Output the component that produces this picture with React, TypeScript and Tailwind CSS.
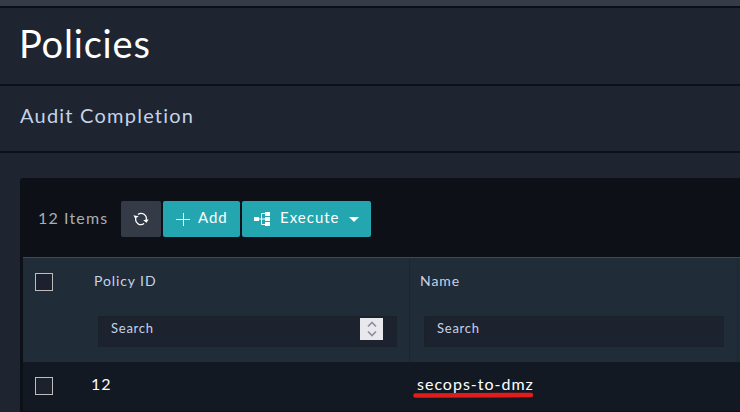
import type { ReactNode } from "react";

function Checkbox() {
  return <span className="block size-[18px] border border-[#bdbdbd] bg-[#1c212d]" />;
}

function RefreshIcon() {
  return (
    <svg width="16" height="14" viewBox="0 0 16 14" fill="none" stroke="#fff" strokeWidth="1.25">
      <path d="M4.9 2.4A5.3 5.3 0 0 1 13.1 8.2" />
      <path d="M11.1 11.6A5.3 5.3 0 0 1 2.9 5.8" />
      <path d="M10.2 8.2l5.4-1-2 3.6z" fill="#fff" stroke="none" />
      <path d="M.4 6.2l5.4-1L2.2 3z" fill="#fff" stroke="none" transform="matrix(1 0 0 -1 0 9.4)" />
    </svg>
  );
}

function TreeIcon() {
  return (
    <svg width="17" height="14" viewBox="0 0 17 14" fill="#fff">
      <path d="M0 5h5v4H0zM11 0h5v4h-5zM11 5h5v4h-5zM11 10h5v4h-5z" />
      <path d="M5 7h6M11 1.5H7.5v11H11" fill="none" stroke="#fff" strokeWidth="1" />
    </svg>
  );
}

function Field({ width, children }: { width: string; children?: ReactNode }) {
  return (
    <div className={`flex h-[31px] items-start justify-between border border-[#19212a] bg-[#1d222f] pr-[13px] pl-3 ${width}`}>
      <span className="pt-[2px] text-[13px] leading-[18px] tracking-[0.75px] text-[#c5d3e8]">Search</span>
      {children}
    </div>
  );
}

export default function App() {
  return (
    <div className="flex h-[412px] w-[740px] flex-col overflow-hidden bg-[#1e2430] font-[Lato,sans-serif]">
      <div className="h-2 shrink-0 border-b-2 border-[#0d1117] bg-[#363b48]" />
      <header className="h-[78px] shrink-0 border-b-2 border-[#0d1117] pt-[11px] pl-[19px]">
        <h1 className="text-[38px] leading-[48px] tracking-[0.8px] text-white">Policies</h1>
      </header>
      <div className="h-[67px] shrink-0 border-b-2 border-[#0d1117] pt-[14px] pl-5">
        <h2 className="text-[20px] leading-[30px] tracking-[1.23px] text-[#c5d3e8]">Audit Completion</h2>
      </div>
      <main className="mt-[25px] ml-5 flex grow flex-col rounded-tl-[3px] bg-[#0d1117] pl-[3px]">
        <div className="flex h-[79px] shrink-0 items-center gap-0.5 pt-[3px] pl-[15px]">
          <span className="w-[81px] pb-0.5 text-[16px] leading-5 tracking-[1.15px] text-[#aaadb1]">12 Items</span>
          <button className="flex h-9 w-10 items-center justify-center rounded-[2px] bg-[#353a47]">
            <RefreshIcon />
          </button>
          <button className="flex h-9 w-[77px] items-center rounded-[2px] bg-[#23a6b0] pl-[13px] text-[15px] tracking-[0.9px] text-white">
            <svg width="14" height="13" viewBox="0 0 14 13" stroke="#fff">
              <path d="M0 6.5h14M7.5 0v13" />
            </svg>
            <span className="ml-2 pb-[3px]">Add</span>
          </button>
          <button className="flex h-9 w-[129px] items-center rounded-[2px] bg-[#23a6b0] pl-3 text-[15px] tracking-[1px] text-white">
            <TreeIcon />
            <span className="ml-[9px] w-[60px] pb-[3px] text-left">Execute</span>
            <svg className="ml-[9px]" width="10" height="5" viewBox="0 0 10 5" fill="#fff">
              <path d="M0 0h10L5 5z" />
            </svg>
          </button>
        </div>
        <div className="grid h-[105px] shrink-0 grid-cols-[387px_328px_2px] border-t border-[#3c4a59] bg-[#212c39]">
          <div className="flex border-r border-[#1c2631] pt-[15px] pl-3">
            <Checkbox />
            <div className="ml-[41px]">
              <p className="-mt-px h-11 text-[14px] leading-[18px] tracking-[0.9px] text-[#c5d3e8]">Policy ID</p>
              <div className="ml-1">
                <Field width="w-[299px]">
                  <span className="mt-px flex h-[22px] w-[23px] items-center justify-center bg-[#e9e9ed]">
                    <svg width="10" height="16" viewBox="0 0 10 16" fill="none" stroke="#8f8f9d" strokeWidth="1.7">
                      <path d="M1 5.5l4-4 4 4M1 10.5l4 4 4-4" />
                    </svg>
                  </span>
                </Field>
              </div>
            </div>
          </div>
          <div className="border-r border-[#1c2631] pt-[15px] pl-[10px]">
            <p className="-mt-px h-11 text-[14px] leading-[18px] tracking-[0.9px] text-[#c5d3e8]">Name</p>
            <div className="ml-1">
              <Field width="w-[300px]" />
            </div>
          </div>
        </div>
        <div className="grid h-[49px] shrink-0 grid-cols-[387px_1fr] bg-[#131922]">
          <div className="flex pt-[15px] pl-3">
            <Checkbox />
            <span className="-mt-[3px] ml-[38px] text-[16px] leading-5 tracking-[0.9px] text-white">12</span>
          </div>
          <div className="relative pt-3 pl-[7px] text-[16px] leading-5 tracking-[1px] text-white">
            secops-to-dmz
            <svg className="absolute top-[30px] left-[3px]" width="121" height="6" viewBox="0 0 121 6">
              <path d="M2.5 3.5h8L118 3" stroke="#e21b1b" strokeWidth="4.6" strokeLinecap="round" />
            </svg>
          </div>
        </div>
      </main>
    </div>
  );
}
